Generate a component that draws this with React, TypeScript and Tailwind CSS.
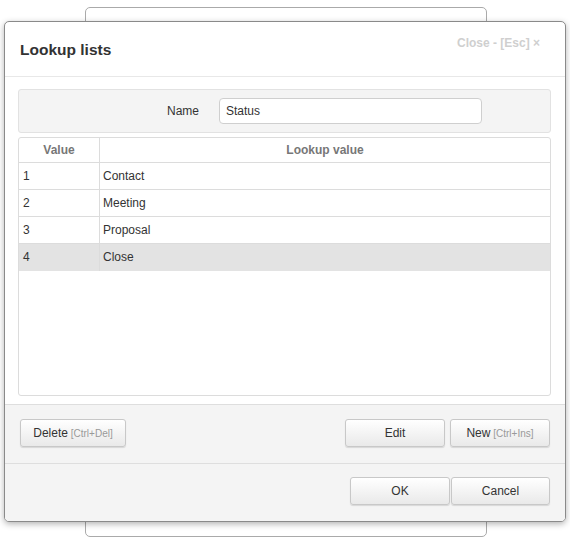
const rows = [
  { id: 1, label: 'Contact' },
  { id: 2, label: 'Meeting' },
  { id: 3, label: 'Proposal' },
  { id: 4, label: 'Close' },
];

function Btn({ label, hint, className = '' }: { label: string; hint?: string; className?: string }) {
  return (
    <button
      className={`h-[28px] rounded-[3px] border border-[#c8c8c8] bg-[linear-gradient(#ffffff,#e9e9e9)] shadow-[0_1px_1px_rgba(0,0,0,0.12)] text-[12px] text-[#333] ${className}`}
    >
      {label}
      {hint && <span className="text-[10px] text-[#999]"> {hint}</span>}
    </button>
  );
}

export default function App() {
  return (
    <div className="relative w-[570px] h-[542px] bg-white overflow-hidden font-['Liberation_Sans',Arial,sans-serif]">
      {/* window behind the dialog */}
      <div className="absolute left-[85px] top-[7px] w-[402px] h-[530px] rounded-[5px] border border-[#aaa] bg-white" />

      {/* Dialog */}
      <div className="absolute left-[4px] top-[21px] w-[562px] h-[501px] rounded-[5px] border border-[#8a8a8a] bg-white shadow-[0_2px_6px_rgba(0,0,0,0.3)] flex flex-col overflow-hidden">
        <div className="relative h-[55px] shrink-0 border-b border-[#e8e8e8] flex items-center pl-[15px] pt-[1px]">
          <h1 className="text-[15.5px] font-bold text-[#333]">Lookup lists</h1>
          <span className="absolute right-[25px] top-[12px] text-[12px] font-bold text-[#cfcfcf]">Close - [Esc] ×</span>
        </div>

        <div className="flex-1 min-h-0 flex flex-col pt-[12px] pb-[8px] pl-[13px] pr-[14px]">
          <div className="h-[44px] shrink-0 rounded-[3px] border border-[#e2e2e2] bg-[#f4f4f4] flex items-center">
            <span className="w-[180px] text-right text-[12px] text-[#333]">Name</span>
            <div className="ml-[20px] w-[263px] h-[26px] rounded-[4px] border border-[#cfcfcf] bg-white flex items-center pl-[6px] text-[12px] text-[#333]">
              Status
            </div>
          </div>

          <div className="mt-[4px] flex-1 rounded-[3px] border border-[#dcdcdc] bg-white overflow-hidden">
            <div className="flex h-[25px] border-b border-[#dcdcdc] text-[12px] font-bold text-[#777]">
              <div className="w-[81px] border-r border-[#dcdcdc] flex items-center justify-center">Value</div>
              <div className="flex-1 flex items-center justify-center">Lookup value</div>
            </div>
            {rows.map((r) => (
              <div
                key={r.id}
                className={`flex h-[27px] text-[12px] text-[#333] ${r.id === 4 ? 'bg-[#e3e3e3]' : 'border-b border-[#dcdcdc]'}`}
              >
                <div className="w-[81px] border-r border-[#dcdcdc] flex items-center pl-[4px] pb-[1px]">{r.id}</div>
                <div className="flex-1 flex items-center pl-[3px] pb-[1px]">{r.label}</div>
              </div>
            ))}
          </div>
        </div>

        <div className="h-[59px] shrink-0 border-t border-[#dedede] bg-[#f4f4f4] flex items-center pl-[15px] pr-[15px] pb-[2px]">
          <Btn label="Delete" hint="[Ctrl+Del]" className="w-[106px]" />
          <div className="flex-1" />
          <Btn label="Edit" className="w-[100px]" />
          <Btn label="New" hint="[Ctrl+Ins]" className="w-[100px] ml-[5px]" />
        </div>

        <div className="h-[58px] shrink-0 border-t border-[#dedede] bg-[#f4f4f4] flex items-start justify-end pt-[13px] pr-[15px]">
          <Btn label="OK" className="w-[100px]" />
          <Btn label="Cancel" className="w-[99px] ml-[1px]" />
        </div>
      </div>
    </div>
  );
}
